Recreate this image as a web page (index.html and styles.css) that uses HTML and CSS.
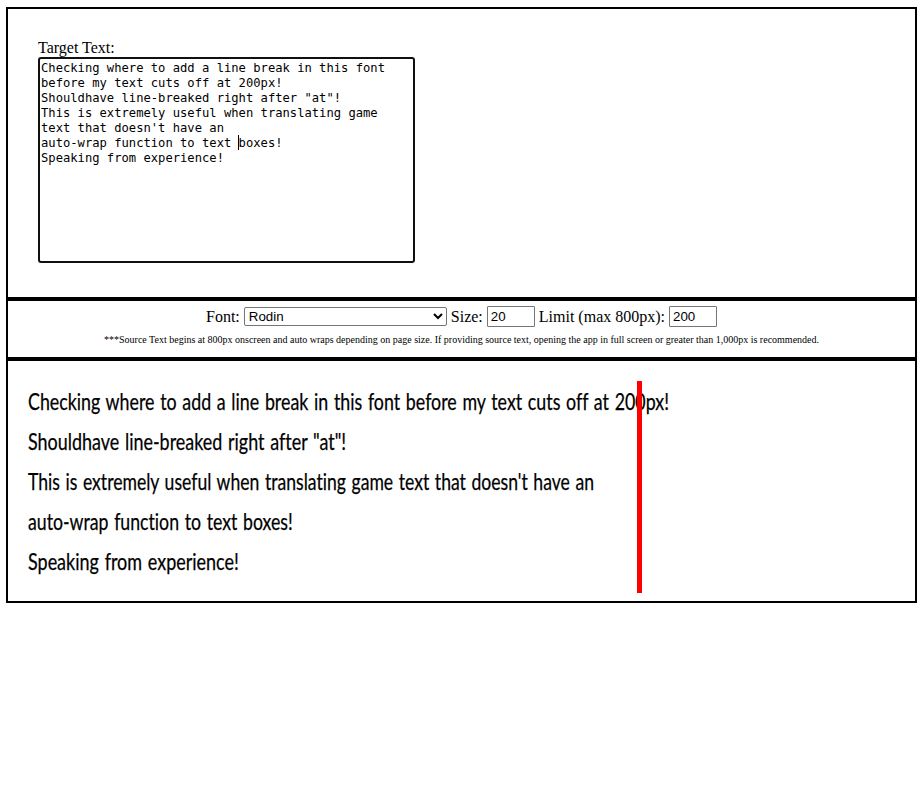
FILE: index.html
```html
<!DOCTYPE html>
<html lang="en">
<head>
<meta charset="utf-8">
<title>Line Break Checker</title>
<link rel="stylesheet" href="styles.css">
</head>
<body>
<main class="app">
  <section class="panel editor">
    <label class="editor-label" for="target">Target Text:</label>
    <div class="editor-field">
      <textarea class="editor-text" id="target" spellcheck="false">Checking where to add a line break in this font before my text cuts off at 200px!
Shouldhave line-breaked right after "at"!
This is extremely useful when translating game text that doesn't have an
auto-wrap function to text boxes!
Speaking from experience!</textarea>
      <span class="caret"></span>
    </div>
  </section>
  <section class="panel controls">
    <div class="controls-row">
      <label for="font">Font:</label>
      <select class="control font" id="font"><option>Rodin</option></select>
      <label for="size">Size:</label>
      <input class="control number" id="size" type="text" value="20">
      <label for="limit">Limit (max 800px):</label>
      <input class="control number" id="limit" type="text" value="200">
    </div>
    <p class="note">***Source Text begins at 800px onscreen and auto wraps depending on page size. If providing source text, opening the app in full screen or greater than 1,000px is recommended.</p>
  </section>
  <section class="panel preview">
    <div class="line line-1">Checking where to add a line break in this font before my text cuts off at 200px!</div>
    <div class="line line-2">Shouldhave line-breaked right after "at"!</div>
    <div class="line line-3">This is extremely useful when translating game text that doesn't have an</div>
    <div class="line line-4">auto-wrap function to text boxes!</div>
    <div class="line line-5">Speaking from experience!</div>
    <div class="limit-line"></div>
  </section>
</main>
</body>
</html>
```
FILE: styles.css
```css
* { box-sizing: border-box; }
body {
  margin: 7px 6px;
  background: #fff;
  color: #000;
  font-family: "Liberation Serif", serif;
  font-size: 16px;
}
.panel { border: 2px solid #000; position: relative; }
.app { width: 911px; }
.editor { height: 292px; padding: 30px; }
.editor-label { display: block; height: 18px; line-height: 18px; }
.editor-field { position: relative; width: 377px; height: 206px; }
.editor-text {
  display: block;
  width: 377px;
  height: 206px;
  margin: 0;
  padding: 2px 1px;
  border: 2px solid #101010;
  border-radius: 3px;
  outline: none;
  resize: none;
  overflow: hidden;
  background: #fff;
  color: #000;
  font: 12.17px/15px "DejaVu Sans Mono", monospace;
}
.caret { position: absolute; left: 200px; top: 78px; width: 1px; height: 15px; background: #000; }
.controls { height: 60px; padding-top: 5px; }
.controls-row { display: flex; justify-content: center; align-items: center; gap: 4px; height: 21px; line-height: 18px; }
.control {
  margin: 0;
  border: 1px solid #767676;
  background: #fff;
  color: #000;
  font: 13.333px "Liberation Sans", sans-serif;
}
.font { width: 203px; height: 19px; border-radius: 2px; padding: 0; }
.number { width: 48px; height: 21px; padding: 1px 3px; border-radius: 1px; }
.note { margin: 7px 0 0; font-size: 10px; line-height: 12px; text-align: center; white-space: nowrap; }
.preview { height: 244px; padding: 20px; }
.line {
  width: max-content;
  height: 40px;
  font: 23.5px/40px Lato, sans-serif;
  font-variant-ligatures: none;
  word-spacing: 1.5px;
  -webkit-text-stroke: .25px #000;
  white-space: pre;
  transform-origin: 0 50%;
  transform: scaleX(.765);
}
.line-1 { transform: scaleX(.758); }
.line-2 { transform: scaleX(.763); }
.line-3 { transform: scaleX(.748); }
.line-4 { transform: scaleX(.753); }
.limit-line { position: absolute; left: 629px; top: 20px; width: 5px; height: 212px; background: #f00; }
```
